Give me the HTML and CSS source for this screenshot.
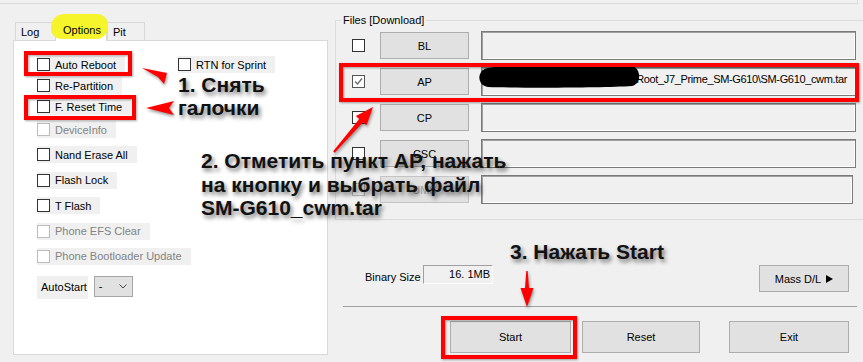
FILE: index.html
```html
<!DOCTYPE html>
<html lang="ru">
  <head>
    <meta charset="UTF-8" />
    <title>Odin3 — Options</title>
    <link rel="stylesheet" href="styles.css">
  </head>
  <body>
    <div class="app">
      <div class="topbar"></div>

      <div class="main">
        <!-- Options tab -->
        <div class="left">
          <div class="tabs">
            <div class="tab">Log</div>
            <div class="tab active"><span class="tab-text">Options</span></div>
            <div class="tab tab-last">Pit</div>
          </div>

          <div class="panel">
            <div class="opts-a">
              <div class="first-row">
                <label class="chk"><span class="box"></span>Auto Reboot</label>
                <label class="chk"><span class="box"></span>RTN for Sprint</label>
              </div>
              <label class="chk"><span class="box"></span>Re-Partition</label>
              <label class="chk"><span class="box"></span>F. Reset Time</label>
            </div>

            <div class="opts-b">
              <label class="chk off"><span class="box"></span>DeviceInfo</label>
              <label class="chk"><span class="box"></span>Nand Erase All</label>
              <label class="chk"><span class="box"></span>Flash Lock</label>
              <label class="chk"><span class="box"></span>T Flash</label>
              <label class="chk off"><span class="box"></span>Phone EFS Clear</label>
              <label class="chk off"><span class="box"></span>Phone Bootloader Update</label>
            </div>

            <div class="autostart">
              <span class="autostart-label">AutoStart</span>
              <div class="combo">
                <span>-</span>
                <svg width="8" height="5" viewBox="0 0 8 5"><polyline points="0.5,0.5 4,4 7.5,0.5" fill="none" stroke="#444" stroke-width="1"/></svg>
              </div>
            </div>
          </div>
        </div>

        <!-- Files -->
        <div class="right">
          <fieldset class="files">
            <legend>Files [Download]</legend>
            <div class="file-rows">
              <div class="file-row">
                <span class="box"></span>
                <button class="btn btn-file">BL</button>
                <div class="path"></div>
              </div>
              <div class="file-row">
                <span class="box checked">
                  <svg width="11" height="11" viewBox="0 0 11 11"><polyline points="2,5.5 4.5,8 9,2.5" fill="none" stroke="#6a6a6a" stroke-width="1.3"/></svg>
                </span>
                <button class="btn btn-file">AP</button>
                <div class="path">Root_J7_Prime_SM-G610\SM-G610_cwm.tar</div>
              </div>
              <div class="file-row">
                <span class="box"></span>
                <button class="btn btn-file">CP</button>
                <div class="path"></div>
              </div>
              <div class="file-row">
                <span class="box"></span>
                <button class="btn btn-file">CSC</button>
                <div class="path"></div>
              </div>
              <div class="file-row">
                <span class="box off"></span>
                <button class="btn btn-file off">UMS</button>
                <div class="path path-short"></div>
              </div>
            </div>
          </fieldset>

          <div class="size-row">
            <span class="size-label">Binary Size</span>
            <div class="size-box">16. 1MB</div>
            <button class="btn btn-mass">Mass D/L
              <svg width="7" height="8" viewBox="0 0 7 8"><polygon points="0,0 7,4 0,8" fill="#000"/></svg>
            </button>
          </div>

          <div class="separator"></div>

          <div class="actions">
            <button class="btn btn-start">Start</button>
            <button class="btn btn-reset">Reset</button>
            <button class="btn btn-exit">Exit</button>
          </div>
        </div>
      </div>

      <!-- annotations drawn over the window -->
      <svg class="marks" width="863" height="362" viewBox="0 0 863 362">
        <path class="blob" d="M488 68 C520 64 600 63 632 66 C641 68 642 84 632 86 C600 88 520 88 488 87 C477 86 476 70 488 68 Z"/>
        <g class="red">
          <rect x="26" y="53" width="104" height="21"/>
          <rect x="26" y="97" width="108" height="21"/>
          <rect x="341" y="65" width="516" height="35"/>
          <rect x="443" y="318" width="132" height="39"/>
        </g>
        <g class="red-fill">
          <polygon points="142,68 167,73 164,84 158,77"/>
          <polygon points="146,108 174,101 169,108 174,115"/>
          <polygon points="333.2,151.3 359.3,119 355.9,116 373,107 366.5,125.2 363.1,122.2 334.8,152.7"/>
          <polygon points="526.3,271 527.7,271 529,288 533.5,288 527,307 520.5,288 525,288"/>
        </g>
      </svg>

      <div class="note note-1">1. Снять<br>галочки</div>
      <div class="note note-2">2. Отметить пункт AP, нажать<br>на кнопку и выбрать файл<br>SM-G610_cwm.tar</div>
      <div class="note note-3">3. Нажать Start</div>
    </div>
  </body>
</html>
```

FILE: styles.css
```css
* {
  margin: 0;
  padding: 0;
  box-sizing: border-box;
}

body {
  width: 863px;
  height: 362px;
  overflow: hidden;
  background: #f0f0f0;
  font-family: "Liberation Sans", Arial, sans-serif;
  font-size: 11px;
  color: #000;
}

.app {
  position: relative;
  width: 863px;
  height: 362px;
  overflow: hidden;
}

.topbar {
  width: 858px;
  height: 4px;
  border-bottom: 1px solid #dadada;
  border-right: 1px solid #dadada;
}

.main {
  display: flex;
}

/* ---------- left: tabs + options ---------- */

.left {
  width: 315px;
  margin-left: 13px;
  margin-top: 15px;
}

.tabs {
  display: flex;
  align-items: flex-end;
  height: 21px;
  padding-left: 2px;
}

.tab {
  width: 40px;
  height: 18px;
  line-height: 18px;
  padding-left: 5px;
  background: #f0f0f0;
  border: 1px solid #d9d9d9;
  border-bottom: none;
  border-right: none;
}

.tab.active {
  position: relative;
  width: 52px;
  height: 22px;
  line-height: 20px;
  padding-left: 7px;
  margin-bottom: -1px;
  background: #fff;
  border-right: 1px solid #d9d9d9;
}

.tab.active::before {
  content: "";
  position: absolute;
  left: -5px;
  top: -6px;
  width: 57px;
  height: 25px;
  background: #f6f52c;
  border-radius: 13px 11px 12px 10px;
  z-index: 0;
}

.tab-text {
  position: relative;
  z-index: 1;
}

.tab-last {
  width: 38px;
  border-right: 1px solid #d9d9d9;
}

.panel {
  width: 315px;
  height: 315px;
  background: #fff;
  border: 1px solid #d9d9d9;
  padding: 15px 0 0 23px;
}

.opts-a {
  display: flex;
  flex-direction: column;
  align-items: flex-start;
  gap: 4px;
}

.opts-b {
  display: flex;
  flex-direction: column;
  align-items: flex-start;
  gap: 8.4px;
  margin-top: 6px;
}

.first-row {
  display: grid;
  grid-template-columns: 141px auto;
  justify-items: start;
}

.chk {
  display: inline-flex;
  align-items: center;
  height: 17px;
  padding-right: 9px;
  background: #f0f0f0;
  white-space: nowrap;
}

.box {
  display: inline-flex;
  align-items: center;
  justify-content: center;
  flex: none;
  width: 13px;
  height: 13px;
  margin-right: 5px;
  background: #fff;
  border: 1px solid #333;
}

.chk.off {
  color: #838383;
}

.chk.off .box,
.box.off {
  border-color: #bcbcbc;
}

.box.checked {
  border-color: #555;
}

.autostart {
  display: flex;
  align-items: flex-start;
  gap: 6px;
  margin-top: 11px;
}

.autostart-label {
  height: 23px;
  line-height: 23px;
  padding: 0 1px 0 4px;
  background: #f0f0f0;
}

.combo {
  display: flex;
  align-items: center;
  justify-content: space-between;
  width: 39px;
  height: 21px;
  padding: 0 5px 0 4px;
  background: #e1e1e1;
  border: 1px solid #a6a6a6;
}

/* ---------- right: files ---------- */

.right {
  width: 524px;
  margin-left: 7px;
  margin-top: 9px;
}

/* the group box runs past the window's right edge */
.files {
  width: 534px;
  border: 1px solid #dcdcdc;
  padding: 4px 12px 15px 0;
}

.files legend {
  margin-left: 5px;
  padding: 0 2px;
  line-height: 14px;
}

.file-rows {
  display: flex;
  flex-direction: column;
  gap: 7px;
  padding-left: 16px;
}

.file-row {
  display: flex;
  align-items: center;
  height: 29px;
}

.file-row .box {
  margin-right: 15px;
}

.btn {
  font-family: "Liberation Sans", Arial, sans-serif;
  font-size: 11px;
  color: #000;
  background: #e1e1e1;
  border: 1px solid #adadad;
}

.btn-file {
  width: 89px;
  height: 27px;
}

.btn.off {
  color: #a0a0a0;
  border-color: #c4c4c4;
}

.path {
  flex: 1;
  height: 29px;
  margin-left: 12px;
  padding: 4px 8px 0 0;
  line-height: 14px;
  letter-spacing: -0.35px;
  text-align: right;
  white-space: nowrap;
  overflow: hidden;
  background: #f0f0f0;
  border: 1px solid #7a7a7a;
  box-shadow: inset 1px 1px 0 #a0a0a0, inset -1px -1px 0 #fff;
}

.path-short {
  margin-right: 3px;
}

.size-row {
  display: flex;
  align-items: flex-start;
  margin-top: 45px;
  padding-left: 30px;
}

.size-label {
  width: 58px;
  line-height: 19px;
  margin-top: 3px;
}

.size-box {
  width: 70px;
  height: 19px;
  line-height: 17px;
  padding-right: 2px;
  text-align: right;
  background: #f0f0f0;
  border: 1px solid;
  border-color: #a0a0a0 #fff #fff #a0a0a0;
}

.btn-mass {
  display: flex;
  align-items: center;
  justify-content: center;
  gap: 5px;
  width: 90px;
  height: 27px;
  margin-left: auto;
  margin-right: 10px;
}

.separator {
  margin: 14px 2px 0 8px;
  border-top: 1px solid #a0a0a0;
}

.actions {
  display: flex;
  margin-top: 14px;
}

.actions .btn {
  height: 32px;
}

.btn-start {
  width: 121px;
  margin-left: 115px;
}

.btn-reset {
  width: 118px;
  margin-left: 11px;
}

.btn-exit {
  width: 120px;
  margin-left: 29px;
}

/* ---------- annotations ---------- */

.marks {
  position: absolute;
  left: 0;
  top: 0;
  pointer-events: none;
}

.blob {
  fill: #000;
}

.red {
  fill: none;
  stroke: #ff0000;
  stroke-width: 4;
  filter: drop-shadow(1px 1px 1px rgba(0, 0, 0, 0.35));
}

.red-fill {
  fill: #ff0000;
  filter: drop-shadow(1px 2px 1.5px rgba(0, 0, 0, 0.4));
}

.note {
  position: absolute;
  font-family: "Liberation Sans", Arial, sans-serif;
  font-weight: bold;
  font-size: 21px;
  line-height: 23.5px;
  color: #111;
  white-space: nowrap;
  text-shadow: 2px 3px 4px rgba(0, 0, 0, 0.55);
}

.note-1 {
  left: 178px;
  top: 73px;
  line-height: 23px;
}

.note-2 {
  left: 201px;
  top: 149px;
}

.note-3 {
  left: 510px;
  top: 240px;
}
```
